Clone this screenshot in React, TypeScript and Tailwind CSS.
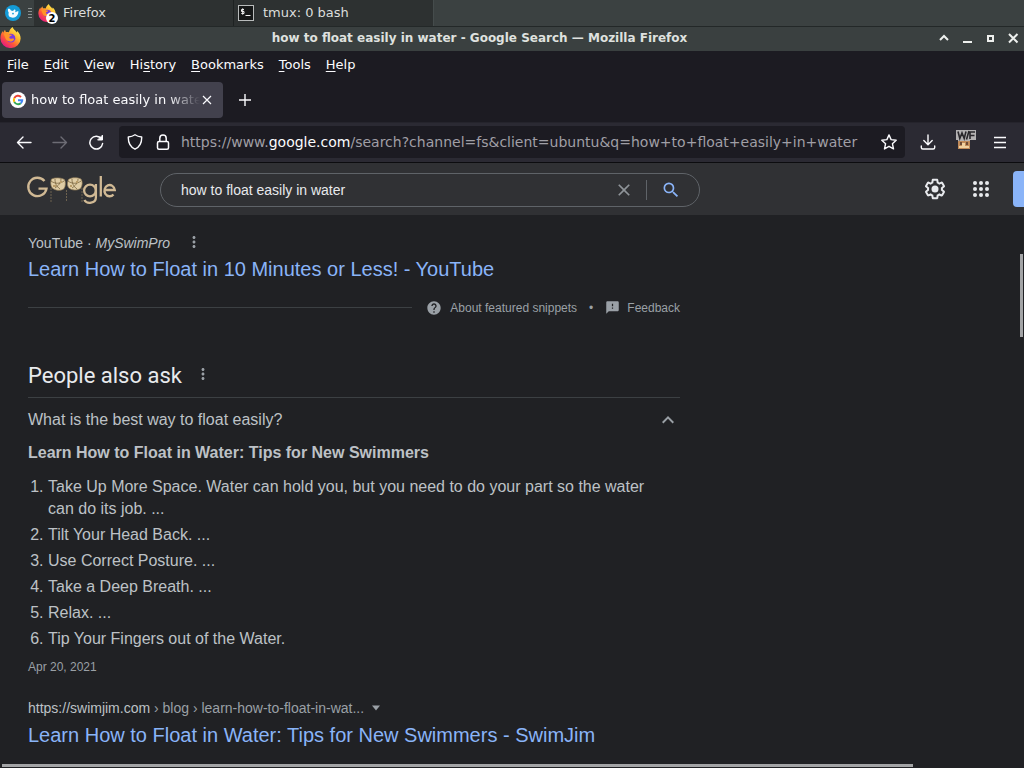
import React from "react";
import {
  MdClose,
  MdFeedback,
  MdHelp,
  MdKeyboardArrowUp,
  MdMoreVert,
  MdSearch,
} from "react-icons/md";

const GEAR =
  "M13.85 22.25h-3.7c-.74 0-1.36-.54-1.45-1.27l-.27-1.89c-.27-.14-.53-.29-.79-.46l-1.8.72c-.7.26-1.47-.03-1.81-.65L2.2 15.53c-.35-.66-.2-1.44.36-1.88l1.53-1.19c-.01-.15-.02-.3-.02-.46 0-.15.01-.31.02-.46l-1.52-1.19c-.59-.45-.74-1.26-.37-1.88l1.85-3.19c.34-.62 1.11-.9 1.79-.63l1.81.73c.26-.17.52-.32.78-.46l.27-1.91c.09-.7.71-1.25 1.44-1.25h3.7c.74 0 1.36.54 1.45 1.27l.27 1.89c.27.14.53.29.79.46l1.8-.72c.71-.26 1.48.03 1.82.65l1.84 3.18c.36.66.2 1.44-.36 1.88l-1.52 1.19c.01.15.02.3.02.46s-.01.31-.02.46l1.52 1.19c.56.45.72 1.23.37 1.86l-1.86 3.22c-.34.62-1.11.9-1.8.63l-1.8-.72c-.26.17-.52.32-.78.46l-.27 1.91c-.1.68-.72 1.22-1.46 1.22zm-3.23-2h2.76l.37-2.55.53-.22c.44-.18.88-.44 1.34-.78l.45-.34 2.38.96 1.38-2.4-2.03-1.58.07-.56c.03-.26.06-.51.06-.78s-.03-.53-.06-.78l-.07-.56 2.03-1.58-1.39-2.4-2.39.96-.45-.35c-.42-.32-.87-.58-1.33-.77l-.52-.22-.37-2.55h-2.76l-.37 2.55-.53.21c-.44.19-.88.44-1.34.79l-.45.33-2.38-.95-1.39 2.39 2.03 1.58-.07.56a7 7 0 0 0-.06.79c0 .26.02.53.06.78l.07.56-2.03 1.58 1.38 2.4 2.39-.96.45.35c.43.33.86.58 1.33.77l.53.22.38 2.55z";

function FirefoxIcon({ id, className }: { id: string; className: string }) {
  return (
    <svg viewBox="0 0 24 24" className={className} aria-hidden="true">
      <defs>
        <linearGradient id={id} x1="0.85" y1="0.1" x2="0.2" y2="0.95">
          <stop offset="0" stopColor="#fff04f" />
          <stop offset="0.35" stopColor="#ffb02e" />
          <stop offset="0.65" stopColor="#ff5a36" />
          <stop offset="1" stopColor="#e31587" />
        </linearGradient>
      </defs>
      <path
        fill={`url(#${id})`}
        d="M14.5 0c.5 2 1.600 3 3.200 4.200L19 6.200 19.600 4.600C22 6.800 23.600 9.700 23.600 13A11.500 11 0 0 1 .5 13C.4 9.500 1.500 6.800 3.200 4.600l.3 2.100L5.700 3l1 2.800c1.300-.3 2.500-.1 3.500.3C10.800 3.500 12.300 1.500 14.500 0z"
      />
      <circle cx="12.500" cy="12.800" r="5" fill="#7a3be0" />
      <path
        fill="#ff9429"
        d="M4.200 7.800c2.600-1.500 5-1 6.600.8 1 .2 2 .1 2.900.3-.3 1.300-2 1.700-2.900 2.200-.5 1.500.5 2.500 2.200 2.200 1.300-.2 2.200-.4 3.200.4-1 2.800-4.500 3.600-7 2.400-3.400-1.500-3.300-5-5-8.300z"
      />
    </svg>
  );
}

function Mouse() {
  return (
    <svg viewBox="0 0 18 18" className="size-4" aria-hidden="true">
      <circle cx="9" cy="9" r="9" fill="#149bd7" />
      <path
        fill="#f4fbff"
        d="M3.500 4.200c1.500-.4 2.600.4 3.200 1.900l2.300.7 1.500-1.800c1-.2 1.500.6 1.300 1.700l-.5 1.500 3.700-1.400c.2 2.400-.5 4.100-1.600 5.400-1.500 2-4.400 2.700-6.800 1.700-2.500-1-3.200-3-2.400-5.600-.8-1-1.300-2.600-.7-4.100z"
      />
      <circle cx="9" cy="9.600" r="1" fill="#149bd7" />
    </svg>
  );
}

function Taskbar() {
  return (
    <div className="flex h-[26px] items-center bg-[#3b4141] text-[13px] text-[#dcdedc]">
      <button aria-label="Applications" className="flex w-[26px] justify-center">
        <Mouse />
      </button>
      <span className="flex w-2 flex-col items-center gap-[2px]" aria-hidden="true">
        <i className="h-px w-1 bg-[#8c9292]" />
        <i className="h-px w-1 bg-[#8c9292]" />
        <i className="h-px w-1 bg-[#8c9292]" />
        <i className="h-px w-1 bg-[#8c9292]" />
      </span>
      <button className="flex h-[26px] w-[200px] items-center gap-[6px] border-r border-[#1e2222] bg-[#2d3131] pl-1 text-left">
        <span className="relative">
          <FirefoxIcon id="fxTask" className="size-[18px]" />
          <span className="absolute top-2 left-2 flex size-3 items-center justify-center rounded-full bg-white text-[10px] font-bold text-black">
            2
          </span>
        </span>
        <span className="pl-px">Firefox</span>
      </button>
      <button className="flex h-[26px] w-[200px] items-center gap-[9px] border-r border-[#454c4c] bg-[#2d3131] pl-1 text-left">
        <svg viewBox="0 0 16 16" className="size-4" aria-hidden="true">
          <rect x="0.500" y="0.500" width="15" height="15" fill="#161818" stroke="#b9bcbc" />
          <path d="M6 4.500H3.500v2H6v2H3.300M4.700 3.300v6.400M7.500 10.500h5" fill="none" stroke="#f0f0f0" />
        </svg>
        <span>tmux: 0 bash</span>
      </button>
    </div>
  );
}

function TitleBar() {
  return (
    <div className="flex h-[25px] items-center border-t border-[#232828] bg-[#3a4040] pb-[3px] text-[#dfe1df]">
      <FirefoxIcon id="fxTitle" className="size-[21px]" />
      <h1 className="min-w-0 flex-1 truncate pl-[2px] text-center text-xs font-bold">
        how to float easily in water - Google Search — Mozilla Firefox
      </h1>
      <div className="flex gap-[7px] pr-[3px]">
        <button aria-label="Roll up" className="size-4">
          <svg viewBox="0 0 16 16" fill="none" stroke="#eef0ee" strokeWidth="2">
            <path d="M4 10l4-4 4 4" />
          </svg>
        </button>
        <button aria-label="Minimize" className="size-4">
          <svg viewBox="0 0 16 16" fill="none" stroke="#eef0ee" strokeWidth="2">
            <path d="M4 12h9" />
          </svg>
        </button>
        <button aria-label="Maximize" className="size-4">
          <svg viewBox="0 0 16 16" fill="none" stroke="#eef0ee" strokeWidth="2">
            <rect x="6" y="6" width="5" height="5" />
          </svg>
        </button>
        <button aria-label="Close window" className="size-4">
          <svg viewBox="0 0 16 16" fill="none" stroke="#eef0ee" strokeWidth="2">
            <path d="M4 4l8.500 8.500M12.500 4L4 12.500" />
          </svg>
        </button>
      </div>
    </div>
  );
}

const menus: [string, string, string][] = [
  ["", "F", "ile"],
  ["", "E", "dit"],
  ["", "V", "iew"],
  ["Hi", "s", "tory"],
  ["", "B", "ookmarks"],
  ["", "T", "ools"],
  ["", "H", "elp"],
];

function MenuBar() {
  return (
    <nav className="flex h-[26px] items-center gap-[15px] px-[7px] pt-px text-[13px] text-[#fbfbfe]">
      {menus.map(([pre, key, post]) => (
        <button key={key + post}>
          {pre}
          <span className="underline underline-offset-2">{key}</span>
          {post}
        </button>
      ))}
    </nav>
  );
}

function TabStrip() {
  return (
    <div className="flex h-[45px] items-center text-[#fbfbfe]">
      <div className="ml-[2px] flex h-9 w-[221px] items-center rounded-[4px] bg-[#42414d] pr-[10px] pl-2 text-[13px]">
        <svg viewBox="0 0 16 16" className="size-4 shrink-0" fill="none" strokeWidth="2" aria-hidden="true">
          <circle cx="8" cy="8" r="8" fill="#fff" />
          <path d="M4.300 6.100A4.200 4.200 0 0 1 11 5" stroke="#ea4335" />
          <path d="M4.300 9.900a4.200 4.200 0 0 1 0-3.800" stroke="#fbbc05" />
          <path d="M10.800 11.200a4.200 4.200 0 0 1-6.500-1.300" stroke="#34a853" />
          <path d="M8 8.200h4.200a4.200 4.200 0 0 1-1.400 3" stroke="#4285f4" />
        </svg>
        <span className="ml-[5px] min-w-0 flex-1 overflow-hidden whitespace-nowrap [mask-image:linear-gradient(to_left,transparent,black_32px)]">
          how to float easily in water - Google Search
        </span>
        <button aria-label="Close tab" className="ml-px size-3 shrink-0">
          <svg viewBox="0 0 12 12" stroke="#fbfbfe" strokeWidth="1.200">
            <path d="M2 2l8 8M10 2l-8 8" />
          </svg>
        </button>
      </div>
      <button aria-label="New tab" className="ml-[14px] size-4">
        <svg viewBox="0 0 16 16" stroke="#fbfbfe" strokeWidth="1.400">
          <path d="M8 2v12M2 8h12" />
        </svg>
      </button>
    </div>
  );
}

function NavBar() {
  return (
    <div className="flex h-10 items-center border-t border-[#25242c] bg-[#2b2a33] px-4 pb-[2px] text-[#fbfbfe]">
      <button aria-label="Back" className="size-4">
        <svg viewBox="0 0 16 16" fill="none" stroke="currentColor" strokeWidth="1.400" strokeLinecap="round" strokeLinejoin="round">
          <path d="M15 8.500H1.500M7 3L1.500 8.500 7 14" />
        </svg>
      </button>
      <button aria-label="Forward" className="ml-5 size-4 text-[#6d6c75]">
        <svg viewBox="0 0 16 16" fill="none" stroke="currentColor" strokeWidth="1.400" strokeLinecap="round" strokeLinejoin="round">
          <path d="M1 8.500h13.500M9 3l5.500 5.500L9 14" />
        </svg>
      </button>
      <button aria-label="Reload" className="ml-5 size-4">
        <svg viewBox="0 0 16 16" fill="none" stroke="currentColor" strokeWidth="1.500" strokeLinecap="round">
          <path d="M13.500 5A6.400 6.400 0 1 0 14.600 9.500" />
          <path d="M14.500 1.500v4.500h-4.500z" fill="currentColor" strokeWidth="1" strokeLinejoin="round" />
        </svg>
      </button>
      <div className="ml-[15px] flex h-8 min-w-0 flex-1 items-center rounded-[4px] bg-[#1c1b22] px-2">
        <button aria-label="Tracking protection" className="size-4 shrink-0">
          <svg viewBox="0 0 16 16" fill="none" stroke="currentColor" strokeWidth="1.400" strokeLinejoin="round">
            <path d="M8 .8c2 1.400 4.200 2 6.700 2.200.2 5.400-1.500 9.800-6.700 12.200C2.800 12.800 1.100 8.400 1.300 3 3.800 2.800 6 2.200 8 .8z" />
          </svg>
        </button>
        <button aria-label="Connection secure" className="ml-3 size-4 shrink-0">
          <svg viewBox="0 0 16 16" fill="none" stroke="currentColor" strokeWidth="1.500">
            <rect x="2.500" y="7.500" width="11" height="7.700" rx="1.500" />
            <path d="M4.800 7.500V4.200a3.200 3.200 0 0 1 6.400 0v3.300" />
          </svg>
        </button>
        <a
          href="https://www.google.com/search?channel=fs&client=ubuntu&q=how+to+float+easily+in+water"
          className="ml-[10px] min-w-0 flex-1 overflow-hidden text-sm whitespace-nowrap text-[#a09fa6]"
        >
          https://www.<span className="text-[#fbfbfe]">google.com</span>
          /search?channel=fs&amp;client=ubuntu&amp;q=how+to+float+easily+in+water
        </a>
        <button aria-label="Bookmark this page" className="size-4 shrink-0">
          <svg viewBox="0 0 16 16" fill="none" stroke="currentColor" strokeWidth="1.400" strokeLinejoin="round">
            <path d="M8 .9l2.100 4.700 5.100.6-3.800 3.500 1.100 5.200L8 12.300l-4.500 2.600 1.100-5.200L.8 6.200l5.100-.6z" />
          </svg>
        </button>
      </div>
      <button aria-label="Downloads" className="ml-[15px] size-4">
        <svg viewBox="0 0 16 16" fill="none" stroke="currentColor" strokeWidth="1.400" strokeLinecap="round" strokeLinejoin="round">
          <path d="M8 1v9.500M3.800 6.500L8 10.700l4.200-4.200M1.300 12v1.500c0 .9.600 1.500 1.500 1.500h10.400c.9 0 1.500-.6 1.500-1.500V12" />
        </svg>
      </button>
      <button aria-label="Extension" className="-mt-1 ml-5 h-5 w-5">
        <svg viewBox="0 0 20 20" aria-hidden="true">
          <path fill="#b3b1b2" d="M0 0h20v10h-6v3H2v-3H0z" />
          <path fill="none" stroke="#29272b" strokeWidth="1.600" d="M2 1.500l1.800 7L6 3l2.200 5.500L10 1.500M13 1l-2.500 8.500M14 9V2h5M14 5.500h4.500" />
          <path fill="#c08a59" d="M2 11h12v8H2z" />
          <path fill="#6d4a35" d="M4 12h2v3H4zM10 12h2v3h-2z" />
          <path fill="#efd0a0" d="M6 13h3v3H6zM3 16h10v2H3z" />
        </svg>
      </button>
      <button aria-label="Application menu" className="ml-4 size-4">
        <svg viewBox="0 0 16 16" stroke="currentColor" strokeWidth="1.400">
          <path d="M2 3.500h12M2 8.500h12M2 13.500h12" />
        </svg>
      </button>
    </div>
  );
}

function Doodle() {
  return (
    <svg viewBox="0 0 92 34" className="h-[34px] w-[92px]" role="img" aria-label="Google">
      <g fill="none" stroke="#d0b994" strokeWidth="2.300">
        <path d="M18.500 8A9.200 9.200 0 1 0 20.500 15.700H12.500" />
        <circle cx="64" cy="17.500" r="5.900" />
        <path d="M69.900 11v13.500c0 6-9 7-11.500 2.500M74.800 3v20.500M79 17h9.800a5.200 5.600 0 1 0-1.300 4.400" />
      </g>
      <g stroke="#6d624f" strokeWidth="1" strokeDasharray="2 1">
        <path d="M25 15v14M40.500 17v12M56 15v14" />
      </g>
      <g fill="#e0cda5" stroke="#927d56" strokeWidth="0.700">
        <path d="M25.500 6c3.500-1.600 9-1.500 12.800.4 1.600 2.400 1.400 6.600-.3 9.300-3.500 2.600-8.500 2-12-1-1.500-2.300-1.600-6-.5-8.700z" />
        <path d="M42.500 6.500c3-2.300 9-2.300 12.500-.4 1.800 2.500 1.500 6.500-.3 9.200-3.500 2.500-9 2.300-12-.5-1.700-2-1.500-5.600-.2-8.300z" />
      </g>
      <path
        fill="none"
        stroke="#77633e"
        strokeWidth="0.800"
        d="M25 8c4 3 9 3 13 0M29 6c0 4 1 7 5 10M35 6c0 4-3 7-6 9M42 8c4 3 9 3 13 0M46 6c0 4 1 7 5 10M52 6c0 4-3 7-6 9"
      />
      <path fill="#b99c68" d="M27 12h3v2h-3zM34 8h2v2h-2zM44 12h2v2h-2zM50 8h2v2h-2z" />
    </svg>
  );
}

function SearchHeader() {
  return (
    <header className="flex h-[53px] items-center border-t border-[#0c0c0f] bg-[#303134] pt-px pl-[26px]">
      <a href="https://www.google.com/" className="block w-[134px]">
        <Doodle />
      </a>
      <form
        className="flex h-[34px] w-[540px] items-center rounded-full border border-[#5f6368] pr-[18px] pl-5"
        onSubmit={(e) => e.preventDefault()}
      >
        <input
          aria-label="Search"
          defaultValue="how to float easily in water"
          className="min-w-0 flex-1 bg-transparent text-sm text-[#e8eaed] outline-none"
        />
        <button type="button" aria-label="Clear" className="text-[#8f9499]">
          <MdClose className="size-5" />
        </button>
        <span className="ml-3 h-5 w-px bg-[#5f6368]" />
        <button type="submit" aria-label="Submit search" className="ml-[14px] text-[#8ab4f8]">
          <MdSearch className="size-5" />
        </button>
      </form>
      <div className="ml-auto flex items-center pb-px">
        <button aria-label="Settings" className="size-[22px]">
          <svg viewBox="1 1 22 22" fill="#e8eaed">
            <path d={GEAR} />
            <circle cx="12" cy="12" r="3.500" />
          </svg>
        </button>
        <button aria-label="Apps" className="ml-[23px] size-6">
          <svg viewBox="0 0 24 24" fill="#e8eaed">
            {[6, 12, 18].map((y) => [6, 12, 18].map((x) => <circle key={`${x}-${y}`} cx={x} cy={y} r="2" />))}
          </svg>
        </button>
        <a href="#signin" aria-label="Sign in" className="ml-5 h-9 w-[11px] rounded-l-[4px] bg-[#8ab4f8]" />
      </div>
    </header>
  );
}

const steps = [
  "Take Up More Space. Water can hold you, but you need to do your part so the water can do its job. ...",
  "Tilt Your Head Back. ...",
  "Use Correct Posture. ...",
  "Take a Deep Breath. ...",
  "Relax. ...",
  "Tip Your Fingers out of the Water.",
];

function Results() {
  return (
    <main className="relative flex-1 overflow-hidden bg-[#202124] pt-[18px] pb-5 pl-7 text-[#bdc1c6]">
      <div className="w-[652px] max-w-full">
        <div className="flex h-5 items-center text-sm">
          <cite className="not-italic">
            YouTube · <em>MySwimPro</em>
          </cite>
          <button aria-label="About this result" className="ml-[15px] pb-[3px] text-[#9aa0a6]">
            <MdMoreVert className="size-[18px]" />
          </button>
        </div>
        <a href="#youtube" className="mt-[3px] block text-xl leading-[26px] text-[#8ab4f8]">
          Learn How to Float in 10 Minutes or Less! - YouTube
        </a>
        <div className="mt-[13px] flex h-[25px] items-center text-xs text-[#9aa0a6]">
          <hr className="flex-1 border-[#3c4043]" />
          <a href="#about" className="ml-[14px] flex items-center gap-2">
            <MdHelp className="size-4" />
            About featured snippets
          </a>
          <span className="mx-3">•</span>
          <a href="#feedback" className="flex items-center gap-[7px]">
            <MdFeedback className="size-[15px]" />
            Feedback
          </a>
        </div>

        <div className="mt-10 flex h-[30px] items-center">
          <h2 className="font-[Roboto,sans-serif] text-[22px] text-[#e8eaed]">People also ask</h2>
          <button aria-label="About these questions" className="ml-3 pb-[3px] text-[#9aa0a6]">
            <MdMoreVert className="size-[18px]" />
          </button>
        </div>
        <button
          aria-expanded="true"
          className="mt-[7px] flex h-11 w-full items-center justify-between border-t border-[#3c4043] text-left text-base"
        >
          What is the best way to float easily?
          <MdKeyboardArrowUp className="size-6 text-[#9aa0a6]" />
        </button>
        <h3 className="mt-px text-base leading-[22px] font-bold">Learn How to Float in Water: Tips for New Swimmers</h3>
        <ol className="mt-3 flex list-decimal flex-col gap-1 pr-6 pl-5 text-base leading-[22px]">
          {steps.map((s) => (
            <li key={s}>{s}</li>
          ))}
        </ol>
        <time className="mt-[7px] block text-xs leading-[20px] text-[#9aa0a6]">Apr 20, 2021</time>
        <div className="mt-[21px] flex h-5 items-center text-sm text-[#9aa0a6]">
          <cite className="not-italic">
            <span className="text-[#bdc1c6]">https://swimjim.com</span> › blog › learn-how-to-float-in-wat...
          </cite>
          <button aria-label="More about this page" className="ml-2">
            <svg viewBox="0 0 8 6" className="h-[6px] w-2" fill="currentColor">
              <path d="M0 .5h8L4 5.500z" />
            </svg>
          </button>
        </div>
        <a href="#swimjim" className="mt-1 block text-xl leading-[26px] text-[#8ab4f8]">
          Learn How to Float in Water: Tips for New Swimmers - SwimJim
        </a>
      </div>
      <div className="absolute top-[39px] right-px h-[83px] w-[3px] bg-[#a3a4a6]" />
      <div className="absolute bottom-px left-[2px] h-[3px] w-[89%] bg-[#a3a4a6]" />
    </main>
  );
}

export default function App() {
  return (
    <div className="flex min-h-screen flex-col bg-[#1c1b22] font-['DejaVu_Sans',sans-serif]">
      <Taskbar />
      <TitleBar />
      <MenuBar />
      <TabStrip />
      <NavBar />
      <div className="flex flex-1 flex-col font-['Liberation_Sans',Arial,sans-serif]">
        <SearchHeader />
        <Results />
      </div>
    </div>
  );
}
